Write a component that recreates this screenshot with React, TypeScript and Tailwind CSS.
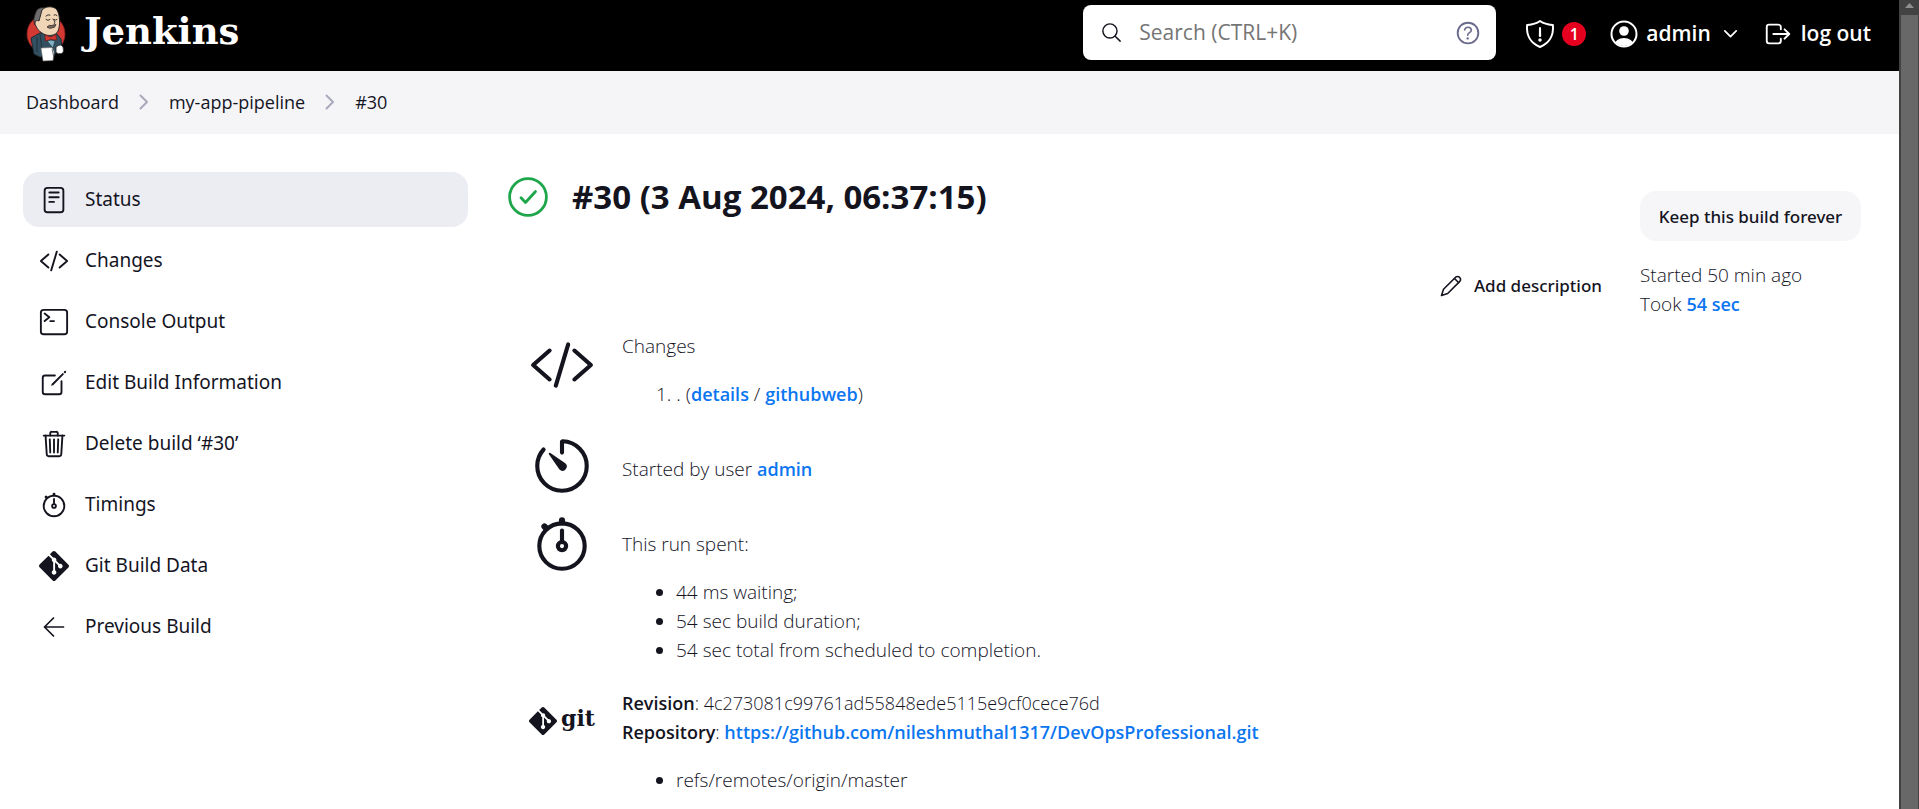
import type { ReactNode } from "react";
import {
  IoCodeSlashOutline,
  IoCreateOutline,
  IoHelpCircleOutline,
  IoLogOutOutline,
  IoReaderOutline,
  IoSearchOutline,
  IoStopwatchOutline,
  IoTerminalOutline,
  IoTimerOutline,
  IoTrashOutline,
} from "react-icons/io5";
import { SiGit } from "react-icons/si";

function JenkinsLogo() {
  return (
    <svg viewBox="0 0 40 56" className="h-14 w-10 shrink-0" aria-hidden="true">
      <circle cx="20" cy="28" r="19" fill="#d33833" stroke="#8f2420" strokeWidth="0.8" />
      <path d="M5 32 L14 27 L30 27 L35 33 L36 43 L30 46 L28 50 L14 51 L8 48 Z" fill="#335061" stroke="#1d2a33" strokeWidth="1" />
      <path d="M14 28 L16 44 M11 31 L11 46" stroke="#1d2a33" strokeWidth="0.8" fill="none" />
      <path d="M10 6 C8 10 7 15 9 19 L13 20 L15 10 L20 2 C15 1 11 2 10 6Z" fill="#6d6b6d" stroke="#231f20" strokeWidth="0.8" />
      <path d="M16 4 C20 -0.500 28 0 31 4 C34 9 34.500 19 32 25 C30 30 21 31 16 27 C13 25 11 23 10 20 C8 18 9 13 13 15 Z" fill="#f0d6b7" stroke="#231f20" strokeWidth="0.9" />
      <path d="M20 10 q2 -2 4 -1 M28 9 q1.500 -1 3 0.500 M20 13.500 q2 2 4 0 M28 13.500 q1.500 1.500 3 0 M27 13 q3.500 4 1 5" stroke="#231f20" strokeWidth="0.9" fill="none" strokeLinecap="round" />
      <path d="M21 21 q2 -2.500 5 -1.500 q3 -1 4 -1 q-1 3.500 -4 3.500 q-3 1 -5 -1Z" fill="#7b6b60" stroke="#231f20" strokeWidth="0.7" />
      <path d="M19 29 L25 31 L30 28.500 L30.500 34 L25 33.500 L19.500 35 Z" fill="#d33833" stroke="#7d1815" strokeWidth="0.7" />
      <path d="M21 35 L25 34 L29 35 L27 42 Z" fill="#81b0c4" stroke="#1d2a33" strokeWidth="0.6" />
      <path d="M30 41 q5 -4 7 0 q1.500 5 -1 6.500 q-4 1 -6 -1 Z" fill="#fff" stroke="#231f20" strokeWidth="0.8" />
      <path d="M15 42 L26 41.500 L28 46 L27 54.500 L17 55 Z" fill="#fff" stroke="#777" strokeWidth="0.6" />
      <path d="M26 43 L28 52" stroke="#555" strokeWidth="0.8" fill="none" />
    </svg>
  );
}

function ShieldIcon() {
  return (
    <svg viewBox="0 0 512 512" className="size-8" fill="none" stroke="currentColor" strokeWidth="32" strokeLinecap="round" strokeLinejoin="round" aria-hidden="true">
      <path d="M463 112c-4-3-110 4-207-64C160 116 53 109 49 112c-15 200 72 292 207 352 135-60 222-152 207-352z" />
      <path d="M256 160l3 128h-6z" />
      <circle cx="256" cy="350" r="12" fill="currentColor" />
    </svg>
  );
}

function PersonIcon() {
  return (
    <svg viewBox="0 0 28 28" className="size-7" aria-hidden="true">
      <defs>
        <clipPath id="avatar-clip">
          <circle cx="14" cy="14" r="12" />
        </clipPath>
      </defs>
      <circle cx="14" cy="14" r="12.500" fill="none" stroke="currentColor" strokeWidth="2" />
      <circle cx="14" cy="11" r="4.800" fill="currentColor" />
      <ellipse cx="14" cy="24.500" rx="9.500" ry="6.500" fill="currentColor" clipPath="url(#avatar-clip)" />
    </svg>
  );
}

function Chevron({ className }: { className: string }) {
  return (
    <svg viewBox="0 0 10 16" className={className} fill="none" stroke="currentColor" strokeWidth="2" strokeLinecap="round" strokeLinejoin="round" aria-hidden="true">
      <path d="M1.500 1.500 L8 8 L1.500 14.500" />
    </svg>
  );
}

function PencilIcon() {
  return (
    <svg viewBox="0 0 22 22" className="size-[22px]" fill="none" stroke="currentColor" strokeWidth="1.600" strokeLinecap="round" strokeLinejoin="round" aria-hidden="true">
      <path d="M1.500 20.500 L3.500 14.300 L15.600 2.200 Q17.700 0.700 19.700 2.400 Q21.300 4.300 19.800 6.400 L7.700 18.500 Z" />
      <path d="M14.500 3.500 L18.500 7.500" />
    </svg>
  );
}

function SuccessIcon() {
  return (
    <svg viewBox="0 0 40 40" className="size-10 shrink-0" fill="none" stroke="#1ea64b" strokeWidth="2.800" strokeLinecap="round" strokeLinejoin="round" role="img" aria-label="Success">
      <circle cx="20" cy="20" r="18.400" />
      <path d="M13 20.800 L17.500 25.500 L27.500 14.500" />
    </svg>
  );
}

function BackIcon() {
  return (
    <svg viewBox="0 0 30 30" className="size-[30px]" fill="none" stroke="currentColor" strokeWidth="1.700" strokeLinecap="round" strokeLinejoin="round" aria-hidden="true">
      <path d="M14.500 6 L5.500 15 L14.500 24 M5.500 15 H24.500" />
    </svg>
  );
}

const tasks: { label: string; icon: ReactNode; active?: boolean }[] = [
  { label: "Status", icon: <IoReaderOutline size={30} />, active: true },
  { label: "Changes", icon: <IoCodeSlashOutline size={30} /> },
  { label: "Console Output", icon: <IoTerminalOutline size={30} /> },
  { label: "Edit Build Information", icon: <IoCreateOutline size={30} /> },
  { label: "Delete build ‘#30’", icon: <IoTrashOutline size={30} /> },
  { label: "Timings", icon: <IoStopwatchOutline size={30} /> },
  { label: "Git Build Data", icon: <SiGit size={30} /> },
  { label: "Previous Build", icon: <BackIcon /> },
];

function Header() {
  return (
    <header className="flex h-[71px] items-center bg-black pr-7 pb-1 pl-[26px] text-white">
      <a href="#home" className="flex items-center gap-[18px]">
        <JenkinsLogo />
        <span className="pb-1 font-['DejaVu_Serif',serif] text-[37px] leading-none font-bold">Jenkins</span>
      </a>
      <div className="mb-0.5 ml-auto flex h-[55px] w-[413px] items-center rounded-lg bg-white pr-[13px] pl-[17px] text-[#14141f]">
        <IoSearchOutline size={23} className="shrink-0" />
        <input
          type="search"
          aria-label="Search"
          placeholder="Search (CTRL+K)"
          className="ml-4 min-w-0 flex-1 bg-transparent text-[21px] outline-none placeholder:text-[#757575]"
        />
        <a href="#help" aria-label="Search help" className="text-[#6a6a8c]">
          <IoHelpCircleOutline size={30} />
        </a>
      </div>
      <nav className="ml-7 flex items-center text-[21px] font-semibold">
        <a href="#security" aria-label="Security warnings" className="flex items-center gap-1.5">
          <ShieldIcon />
          <span className="flex size-6 items-center justify-center rounded-full bg-[#e6001f] text-base">1</span>
        </a>
        <a href="#user" className="ml-6 flex items-center gap-2">
          <PersonIcon />
          admin
        </a>
        <button type="button" aria-label="User menu" className="ml-3 flex h-6 w-4 items-center justify-center">
          <Chevron className="h-[14px] w-[9px] rotate-90" />
        </button>
        <a href="#logout" className="ml-6 flex items-center gap-2">
          <IoLogOutOutline size={30} />
          log out
        </a>
      </nav>
    </header>
  );
}

function Breadcrumbs() {
  return (
    <nav aria-label="Breadcrumb" className="flex h-[63px] items-center gap-5 bg-[#f5f5f8] px-[26px] pb-0.5 text-lg">
      <a href="#dashboard">Dashboard</a>
      <Chevron className="h-4 w-2.5 text-[#a9a9bd]" />
      <a href="#my-app-pipeline">my-app-pipeline</a>
      <Chevron className="h-4 w-2.5 text-[#a9a9bd]" />
      <a href="#30">#30</a>
    </nav>
  );
}

function Sidebar() {
  return (
    <nav aria-label="Build tasks" className="flex w-[445px] shrink-0 flex-col gap-1.5 font-['Noto_Sans',sans-serif]">
      {tasks.map((task) => (
        <a
          key={task.label}
          href="#task"
          className={
            task.active
              ? "flex h-[55px] items-center rounded-2xl bg-[#ecedf3] px-4 text-[19px]"
              : "flex h-[55px] items-center rounded-2xl px-4 text-[19px]"
          }
        >
          <span className="mr-4 flex w-[30px] justify-center">{task.icon}</span>
          {task.label}
        </a>
      ))}
    </nav>
  );
}

function Link({ children }: { children: ReactNode }) {
  return (
    <a href="#link" className="text-lg leading-none font-semibold text-[#0b76f0]">
      {children}
    </a>
  );
}

function Row({ icon, children, className }: { icon: ReactNode; children: ReactNode; className: string }) {
  return (
    <section className="flex gap-[27px]">
      <span className="flex w-[66px] shrink-0 justify-center">{icon}</span>
      <div className={className}>{children}</div>
    </section>
  );
}

export default function App() {
  return (
    <div className="flex min-h-screen bg-white font-['Open_Sans','Noto_Sans',sans-serif] text-[#14141f]">
      <div className="flex min-w-0 flex-1 flex-col">
        <Header />
        <Breadcrumbs />
        <div className="flex gap-10 pt-[38px] pr-[38px] pl-[23px]">
          <Sidebar />
          <main className="min-w-0 flex-1 text-[19px] leading-[29px] font-light">
            <div className="flex h-[160px] items-start justify-between">
              <h1 className="flex items-center gap-6 pt-[3px] text-[33px] leading-[44px] font-bold">
                <SuccessIcon />
                #30 (3 Aug 2024, 06:37:15)
              </h1>
              <div className="flex items-end gap-[38px] pt-[19px]">
                <a href="#description" className="flex items-center gap-3 pb-[19px] font-['Noto_Sans',sans-serif] text-[17px] font-medium">
                  <PencilIcon />
                  Add description
                </a>
                <div className="w-[221px]">
                  <button type="button" className="mb-5 h-[50px] w-full rounded-2xl bg-[#f6f6f9] font-['Noto_Sans',sans-serif] text-[17px] font-medium">
                    Keep this build forever
                  </button>
                  <p>Started 50 min ago</p>
                  <p>
                    Took <Link>54 sec</Link>
                  </p>
                </div>
              </div>
            </div>
            <div className="flex flex-col pl-[21px]">
              <Row icon={<IoCodeSlashOutline size={66} />} className="pb-6">
                <p>Changes</p>
                <ol className="mt-[19px] list-inside list-decimal pl-[34px]">
                  <li>
                    . (<Link>details</Link> / <Link>githubweb</Link>)
                  </li>
                </ol>
              </Row>
              <Row icon={<IoTimerOutline size={66} />} className="pt-[22px] pb-[27px]">
                <p>
                  Started by user <Link>admin</Link>
                </p>
              </Row>
              <Row icon={<IoStopwatchOutline size={66} />} className="pt-[19px] pb-6">
                <p>This run spent:</p>
                <ul className="mt-[19px] list-disc pl-[54px]">
                  <li>44 ms waiting;</li>
                  <li>54 sec build duration;</li>
                  <li>54 sec total from scheduled to completion.</li>
                </ul>
              </Row>
              <Row
                icon={
                  <span className="flex h-16 items-center gap-1">
                    <SiGit size={28} className="shrink-0" />
                    <span className="pb-1.5 font-['DejaVu_Serif',serif] text-[22px] leading-none font-bold">git</span>
                  </span>
                }
                className=""
              >
                <p className="text-lg leading-[29px]">
                  <b className="font-semibold">Revision</b>: 4c273081c99761ad55848ede5115e9cf0cece76d
                </p>
                <p className="text-lg leading-[29px]">
                  <b className="font-semibold">Repository</b>:{" "}
                  <Link>https://github.com/nileshmuthal1317/DevOpsProfessional.git</Link>
                </p>
                <ul className="mt-[19px] list-disc pl-[54px]">
                  <li>refs/remotes/origin/master</li>
                </ul>
              </Row>
            </div>
          </main>
        </div>
      </div>
      <div aria-hidden="true" className="flex w-5 shrink-0 flex-col items-stretch bg-[#424242] pr-px pl-0.5">
        <svg viewBox="0 0 17 15" className="h-[15px]">
          <path d="M8.500 3 L13 8 H4 Z" fill="#8f8f8f" />
        </svg>
        <div className="flex-1 bg-[#686868]" />
      </div>
    </div>
  );
}
